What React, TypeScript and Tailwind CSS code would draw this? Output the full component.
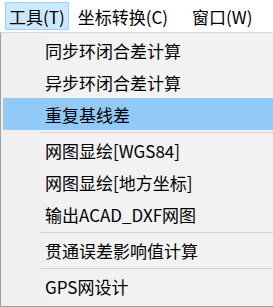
import React from 'react';

const font = { fontFamily: '"Noto Sans CJK SC", "Liberation Sans", sans-serif' };

type Entry = { label: string; active?: boolean } | 'sep';

const entries: Entry[] = [
  { label: '同步环闭合差计算' },
  { label: '异步环闭合差计算' },
  { label: '重复基线差', active: true },
  'sep',
  { label: '网图显绘[WGS84]' },
  { label: '网图显绘[地方坐标]' },
  { label: '输出ACAD_DXF网图' },
  'sep',
  { label: '贯通误差影响值计算' },
  'sep',
  { label: 'GPS网设计' },
];

const App: React.FC = () => {
  return (
    <div className="w-[273px] h-[307px] bg-white overflow-hidden text-black" style={font}>
      {/* Menu bar */}
      <div className="h-[32px] flex items-center text-[17px] leading-none">
        <div className="ml-[5px] h-[28px] px-[3px] flex items-center bg-[#cce8ff] border border-[#99d1ff]">
          工具(T)
        </div>
        <div className="ml-[8px] px-[1px]">坐标转换(C)</div>
        <div className="ml-[23px]">窗口(W)</div>
      </div>

      {/* Dropdown */}
      <div className="w-[290px] h-[275px] border-l border-t border-b border-[#a0a0a0] border-t-[#d8d8d8] bg-[#f0f0f0] pt-[1px] flex flex-col">
        {entries.map((e, i) =>
          e === 'sep' ? (
            <div key={i} className="h-[4px] flex items-center">
              <div className="ml-[39px] flex-1 h-px bg-[#d4d4d4]" />
            </div>
          ) : (
            <div
              key={i}
              className={`h-[32px] flex items-center text-[17px] leading-none ${
                e.active ? 'bg-[#91c9f7] ml-[2px]' : ''
              }`}
            >
              <div className={`${e.active ? 'w-[42px]' : 'w-[44px]'} h-full shrink-0`} />
              <div className={`flex-1 h-full flex items-center ${e.active ? '' : 'bg-[#f2f2f2]'}`}>{e.label}</div>
            </div>
          )
        )}
      </div>
    </div>
  );
};

export default App;
